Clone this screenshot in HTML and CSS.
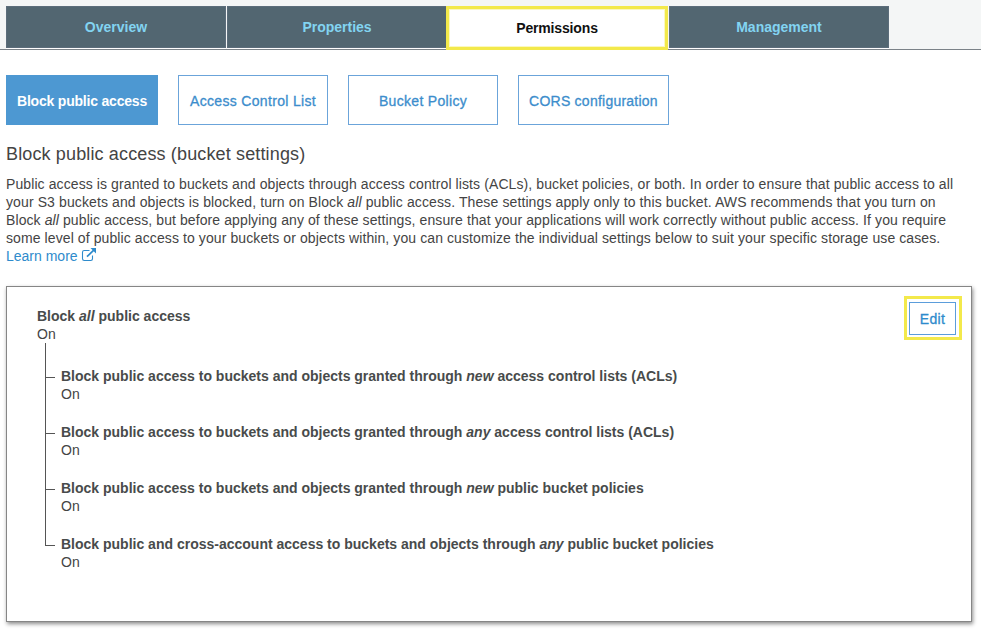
FILE: index.html
```html
<!DOCTYPE html>
<html lang="en">
<head>
<meta charset="utf-8">
<title>Bucket permissions</title>
<link rel="stylesheet" href="styles.css">
</head>
<body>
<nav class="tabs">
  <a class="tab">Overview</a>
  <a class="tab">Properties</a>
  <a class="tab active">Permissions</a>
  <a class="tab">Management</a>
</nav>
<main>
  <div class="subtabs">
    <a class="subtab selected">Block public access</a>
    <a class="subtab">Access Control List</a>
    <a class="subtab">Bucket Policy</a>
    <a class="subtab cors">CORS configuration</a>
  </div>
  <h1>Block public access (bucket settings)</h1>
  <p class="intro">
    <span class="line">Public access is granted to buckets and objects through access control lists (ACLs), bucket policies, or both. In order to ensure that public access to all</span><br>
    <span class="line wide">your S3 buckets and objects is blocked, turn on Block <i>all</i> public access. These settings apply only to this bucket. AWS recommends that you turn on</span><br>
    <span class="line">Block <i>all</i> public access, but before applying any of these settings, ensure that your applications will work correctly without public access. If you require</span><br>
    <span class="line">some level of public access to your buckets or objects within, you can customize the individual settings below to suit your specific storage use cases.</span><br>
    <a class="link">Learn more <svg class="ext" width="16" height="14" viewBox="0 0 16 14"><path d="M8.5 2.5H3.2Q1.5 2.5 1.5 4.2V10.8Q1.5 12.5 3.2 12.5H9.8Q11.5 12.5 11.5 10.8V7.5" fill="none" stroke="currentColor" stroke-width="1.1"/><path d="M6 8.7L13 1.8" stroke="currentColor" stroke-width="1.7"/><path d="M9.5 0H15V5.5Z" fill="currentColor"/></svg></a>
  </p>
  <section class="panel">
    <div class="root">
      <b>Block <i>all</i> public access</b>
      <div>On</div>
      <ul class="tree">
        <li><b>Block public access to buckets and objects granted through <i>new</i> access control lists (ACLs)</b><div>On</div></li>
        <li><b>Block public access to buckets and objects granted through <i>any</i> access control lists (ACLs)</b><div>On</div></li>
        <li><b>Block public access to buckets and objects granted through <i>new</i> public bucket policies</b><div>On</div></li>
        <li><b>Block public and cross-account access to buckets and objects through <i>any</i> public bucket policies</b><div>On</div></li>
      </ul>
    </div>
    <div class="highlight"><button class="edit">Edit</button></div>
  </section>
</main>
</body>
</html>
```
FILE: styles.css
```css
* { box-sizing: border-box; }
html { min-height: 100vh; background: #fff; }
body { margin: 0; min-height: 100vh; color: #444; font: 14px/18px "Liberation Sans", Arial, sans-serif; }
.tabs { display: flex; gap: 1px; height: 50px; padding: 6px 0 0 6px; background: #f4f6f6; border-bottom: 1px solid #7b8288; }
.tab { width: 220px; height: 42px; background: #526671; border: 1px solid #5c6d7b; color: #82d4f1; font-weight: 700; line-height: 40px; text-align: center; box-shadow: 0 1px #fff; }
.tab.active { width: 222px; height: 44px; margin-left: -2px; background: #fff; color: #111; border: 3px solid #f3e94b; line-height: 38px; letter-spacing: -.15px; box-shadow: inset 0 0 0 1px #fbf8c0; position: relative; }
main { padding: 25px 9px 12px 6px; }
.subtabs { display: flex; gap: 20px; }
.subtab { width: 150px; height: 50px; border: 1px solid #6ba4da; color: #3c8dcc; line-height: 50px; text-align: center; white-space: nowrap; letter-spacing: .32px; -webkit-text-stroke: .3px; }
.subtab.selected { width: 152px; background: #4d98d2; border-color: #4d98d2; color: #fff; font-weight: 700; letter-spacing: -.2px; -webkit-text-stroke: 0; }
.subtab.cors { width: 151px; letter-spacing: .24px; }
h1 { margin: 18px 0 9px; font-size: 18px; line-height: 23px; font-weight: 400; letter-spacing: .14px; }
.intro { margin: 0; white-space: nowrap; }
.line { letter-spacing: .096px; }
.line.wide { letter-spacing: .11px; }
.link { color: #2e8bcc; }
.ext { vertical-align: -1px; }
.panel { display: flex; justify-content: space-between; align-items: flex-start; height: 336px; margin-top: 21px; padding: 9px 9px 0 30px; border: 1px solid #868686; box-shadow: 1px 2px 4px rgba(0,0,0,.45); }
.root { padding-top: 11px; }
.root b { color: #484b4b; }
.tree { list-style: none; margin: 0 0 0 8px; padding: 24px 0 0; background: linear-gradient(#555, #555) 0 0 / 1px 203px no-repeat; }
.tree li { height: 56px; padding-left: 16px; background: linear-gradient(#555, #555) 0 10px / 10px 1px no-repeat; white-space: nowrap; }
.highlight { border: 3px solid #f3e94b; width: 58px; height: 44px; padding: 3px 2px 2px 2px; }
.edit { display: block; width: 47px; height: 33px; padding: 1px 0 0; background: #fff; border: 1px solid #5b9ddb; color: #2e8bcc; font: inherit; letter-spacing: .3px; -webkit-text-stroke: .3px; }
```
